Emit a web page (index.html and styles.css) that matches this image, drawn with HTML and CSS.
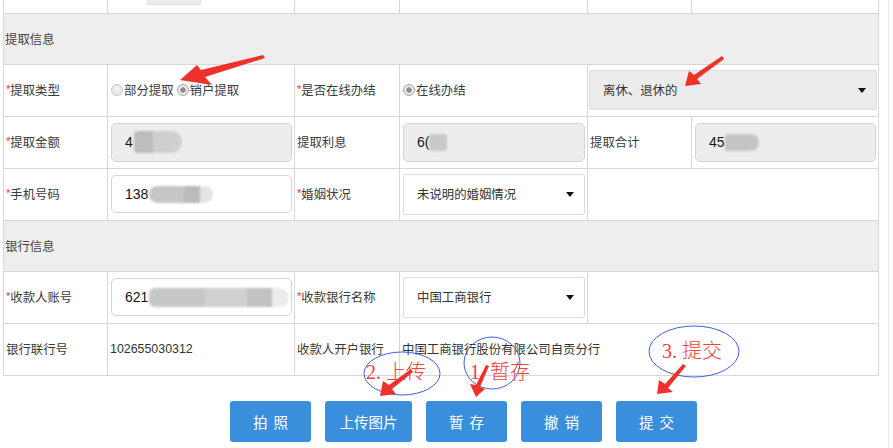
FILE: index.html
```html
<!DOCTYPE html>
<html lang="zh-CN">
<head>
<meta charset="utf-8">
<title>提取信息</title>
<link rel="stylesheet" href="styles.css">
</head>
<body>
<div class="page">
  <div class="main">
    <table class="form">
      <colgroup>
        <col class="c1"><col class="c2"><col class="c3"><col class="c4"><col class="c5"><col class="c6">
      </colgroup>
      <tr class="r-top">
        <td></td><td class="cutcell"><span class="cut"></span></td><td></td><td></td><td></td><td></td>
      </tr>
      <tr class="r-sec"><td colspan="6">提取信息</td></tr>
      <tr>
        <td class="lbl"><i class="req">*</i>提取类型</td>
        <td><div class="radios"><span class="radio"></span>部分提取<span class="radio on gap"></span>销户提取</div></td>
        <td class="lbl"><i class="req">*</i>是否在线办结</td>
        <td><div class="radios"><span class="radio on"></span>在线办结</div></td>
        <td colspan="2" class="wide"><div class="sel gray">离休、退休的</div></td>
      </tr>
      <tr>
        <td class="lbl"><i class="req">*</i>提取金额</td>
        <td><div class="inp dis">4<span class="blur b1"></span></div></td>
        <td class="lbl">提取利息</td>
        <td><div class="inp dis">6(<span class="blur b2"></span></div></td>
        <td class="lbl">提取合计</td>
        <td><div class="inp dis">45<span class="blur b3"></span></div></td>
      </tr>
      <tr>
        <td class="lbl"><i class="req">*</i>手机号码</td>
        <td><div class="inp">138<span class="blur b4"></span></div></td>
        <td class="lbl"><i class="req">*</i>婚姻状况</td>
        <td><div class="sel">未说明的婚姻情况</div></td>
        <td colspan="2"></td>
      </tr>
      <tr class="r-sec"><td colspan="6">银行信息</td></tr>
      <tr>
        <td class="lbl"><i class="req">*</i>收款人账号</td>
        <td><div class="inp">621<span class="blur b5"></span></div></td>
        <td class="lbl"><i class="req">*</i>收款银行名称</td>
        <td><div class="sel">中国工商银行</div></td>
        <td colspan="2"></td>
      </tr>
      <tr>
        <td class="lbl">银行联行号</td>
        <td class="val">102655030312</td>
        <td class="lbl">收款人开户银行</td>
        <td colspan="3" class="val">中国工商银行股份有限公司自贡分行</td>
      </tr>
    </table>
    <div class="actions">
      <button class="btn sp">拍照</button>
      <button class="btn wide-btn">上传图片</button>
      <button class="btn sp">暂存</button>
      <button class="btn sp">撤销</button>
      <button class="btn sp">提交</button>
    </div>
  </div>
  <svg class="marks" width="893" height="448" viewBox="0 0 893 448" aria-hidden="true">
    <g fill="none" stroke="#3f5fe0" stroke-width="1">
      <ellipse cx="402" cy="373.5" rx="38" ry="21.5"/>
      <ellipse cx="492" cy="363" rx="28" ry="26"/>
      <ellipse cx="694" cy="351.5" rx="45" ry="25.5"/>
    </g>
    <g class="note">
      <text x="366" y="379">2. 上传</text>
      <text x="470" y="379">1. 暂存</text>
      <text x="662" y="358">3. 提交</text>
    </g>
    <g fill="#f0302a">
      <polygon points="180,80 197,65 201,70 263,55 265,58 205,77 212,85"/>
      <polygon points="685,86 689,71 694,75 722,56 724,59 697,79 701,84"/>
      <polygon points="380,396 383,381 389,385 411,369 413,372 392,389 396,394"/>
      <polygon points="476,397 470,384 476,385 486,365 489,366 480,387 485,389"/>
      <polygon points="657,394 659,380 665,384 683,364 686,366 668,388 673,392"/>
    </g>
  </svg>
</div>
</body>
</html>
```

FILE: styles.css
```css
* { box-sizing: border-box; }
html, body { margin: 0; background: #fff; }
body {
  font-family: "Liberation Sans", "Noto Sans CJK SC", sans-serif;
  font-size: 12.4px;
  color: #3a3a3a;
}
.page {
  position: relative;
  width: 893px;
  height: 448px;
  overflow: hidden;
}
.main {
  width: 889px;
  height: 448px;
  padding-left: 3px;
  border-right: 1px solid #e6ebf1;
}
.form {
  border-collapse: collapse;
  table-layout: fixed;
  width: 875px;
}
.c1 { width: 104px; }
.c2 { width: 187px; }
.c3 { width: 105px; }
.c4 { width: 188px; }
.c5 { width: 104px; }
.c6 { width: 187px; }
.form td {
  border: 1px solid #d7d7d7;
  padding: 0 2px 0 2px;
  height: 52px;
  vertical-align: middle;
  white-space: nowrap;
  overflow: visible;
}
.form .r-top td {
  height: 13px;
  border-top: none;
  vertical-align: top;
}
.cutcell { padding-left: 39px !important; }
.cut {
  display: block;
  width: 54px;
  height: 5px;
  background: #ececec;
  border: 1px solid #e0e0e0;
  border-top: none;
}
.form .r-sec td {
  background: #eeeeee;
  height: 51px;
  padding-left: 1px;
  color: #444;
}
.lbl { color: #3a3a3a; }
.req {
  font-style: normal;
  color: #e8323a;
  font-size: 11px;
  vertical-align: 2px;
  margin-right: 0;
}
.val { color: #333; }
.radios {
  display: flex;
  align-items: center;
  padding-left: 1px;
}
.radio {
  width: 12px;
  height: 12px;
  border-radius: 50%;
  border: 1px solid #cacaca;
  background: radial-gradient(circle at 50% 40%, #f6f6f6, #dcdcdc);
  margin-right: 1px;
  flex: none;
}
.radio.on {
  border-color: #a8a8a8;
  background: radial-gradient(circle, #8c8c8c 0 2.4px, #ececec 3px, #d8d8d8 100%);
}
.radio.gap { margin-left: 3px; }
.inp {
  height: 38px;
  margin-left: 1px;
  border: 1px solid #d4d4d4;
  border-radius: 5px;
  padding-left: 13px;
  display: flex;
  align-items: center;
  font-size: 14px;
  color: #151515;
  background: #fff;
}
.inp.dis { background: #ededed; height: 39px; }
.blur {
  display: inline-block;
  background: #cbcbcb;
  border-radius: 8px;
  filter: blur(1.2px);
}
.b1 { width: 48px; height: 22px; margin-left: 1px; background: linear-gradient(90deg, #bdbdbd 0 40%, #cfcfcf 40% 100%); border-radius: 4px 12px 12px 4px; }
.b2 { width: 18px; height: 17px; margin-left: 0; background: #c9c9c9; border-radius: 2px; }
.b3 { width: 34px; height: 17px; background: #c4c4c4; border-radius: 3px 9px 9px 3px; }
.b4 { width: 64px; height: 17px; margin-left: 1px; background: linear-gradient(90deg, #c6c6c6 0 55%, #bbbbbb 55% 80%, #e4e4e8 80%); border-radius: 9px; }
.b5 { width: 140px; height: 19px; margin-left: 1px; background: linear-gradient(90deg, #c7c7c7 0 40%, #d0d0d0 40% 70%, #c2c2c2 70% 88%, #ebebeb 88%); border-radius: 6px 10px 10px 6px; }
.sel {
  height: 41px;
  margin-left: 1px;
  border: 1px solid #dedede;
  border-radius: 2px;
  padding: 0 10px 0 13px;
  display: flex;
  align-items: center;
  justify-content: space-between;
  background: #fff;
  color: #333;
}
.sel::after {
  content: "";
  width: 0;
  height: 0;
  border-left: 4px solid transparent;
  border-right: 4px solid transparent;
  border-top: 5px solid #111;
}
.wide { padding: 0 0 0 0 !important; }
.sel.gray { background: #ececec; height: 40px; margin: 0 1px 0 1px; }
.actions {
  display: flex;
  gap: 14px;
  padding: 25px 0 0 227px;
}
.btn {
  width: 81px;
  height: 41px;
  border: none;
  border-radius: 3px;
  background: #3a8fdc;
  color: #fff;
  font-family: "Liberation Sans", "Noto Sans CJK SC", sans-serif;
  font-size: 14.5px;
  padding: 0;
}
.btn.sp { letter-spacing: 6px; text-indent: 6px; }
.btn.wide-btn { width: 87px; }
.marks {
  position: absolute;
  left: 0;
  top: 0;
  pointer-events: none;
}
.note text {
  fill: #f2403c;
  font-family: "Liberation Serif", "Noto Sans CJK SC", serif;
  font-size: 20px;
  font-weight: 300;
}
```
